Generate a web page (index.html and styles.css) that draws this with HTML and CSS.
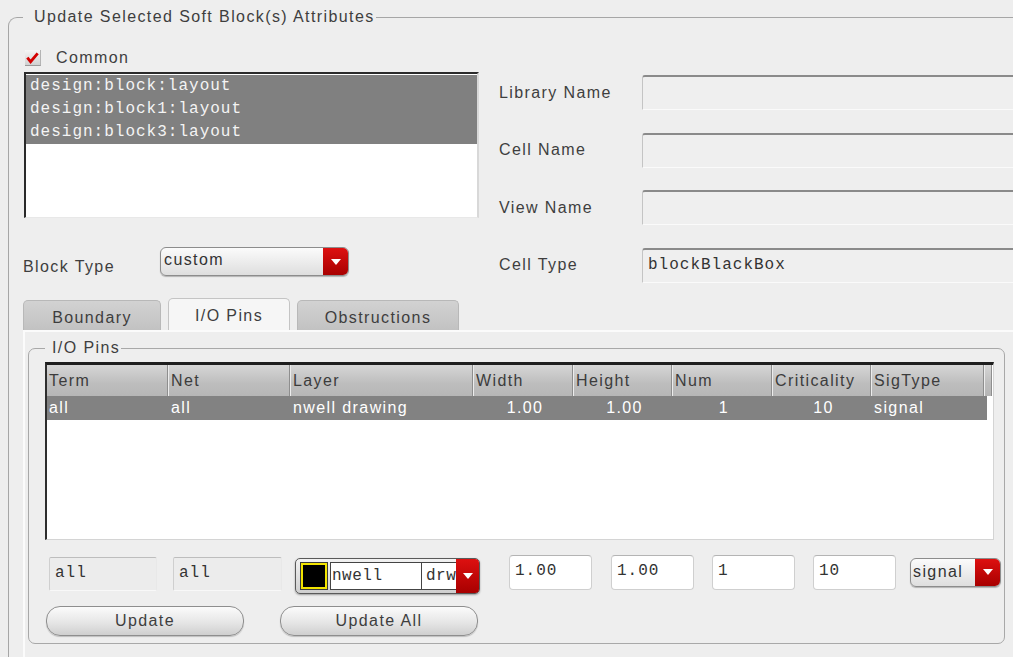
FILE: index.html
```html
<!DOCTYPE html>
<html>
<head>
<meta charset="utf-8">
<title>Update Selected Soft Block(s) Attributes</title>
<link rel="stylesheet" href="styles.css">
</head>
<body>
<div class="page">
  <fieldset class="group outer">
    <legend class="outer-title">Update Selected Soft Block(s) Attributes</legend>
    <div class="top">
      <div class="left">
        <div class="check">
          <span class="checkbox">
            <svg width="16" height="16" viewBox="0 0 16 16"><path d="M2.5 7.5 L6 12 L13.5 3" fill="none" stroke="#d40000" stroke-width="3" stroke-linejoin="miter"/></svg>
          </span>
          <span class="check-label">Common</span>
        </div>
        <div class="listbox mono">
          <div class="li sel">design:block:layout</div>
          <div class="li sel">design:block1:layout</div>
          <div class="li sel">design:block3:layout</div>
        </div>
        <div class="blocktype">
          <span class="bt-label">Block Type</span>
          <div class="combo combo-custom">
            <span class="combo-text">custom</span>
            <span class="combo-btn"><svg width="10" height="6" viewBox="0 0 10 6"><polygon points="0,0 10,0 5,6" fill="#fff"/></svg></span>
          </div>
        </div>
      </div>
      <div class="right">
        <div class="frow"><span class="flabel">Library Name</span><div class="rofield mono"></div></div>
        <div class="frow"><span class="flabel">Cell Name</span><div class="rofield mono"></div></div>
        <div class="frow"><span class="flabel">View Name</span><div class="rofield mono"></div></div>
        <div class="frow"><span class="flabel">Cell Type</span><div class="rofield mono">blockBlackBox</div></div>
      </div>
    </div>

    <div class="tabs">
      <div class="tab tab-boundary">Boundary</div>
      <div class="tab tab-io active">I/O Pins</div>
      <div class="tab tab-obs">Obstructions</div>
    </div>

    <div class="panel">
      <fieldset class="group inner">
        <legend class="inner-title">I/O Pins</legend>
        <div class="table">
          <div class="thead">
            <div class="th">Term</div>
            <div class="th">Net</div>
            <div class="th">Layer</div>
            <div class="th">Width</div>
            <div class="th">Height</div>
            <div class="th">Num</div>
            <div class="th">Criticality</div>
            <div class="th">SigType</div>
            <div class="th th-fill"></div>
          </div>
          <div class="trow sel">
            <div class="td">all</div>
            <div class="td">all</div>
            <div class="td">nwell drawing</div>
            <div class="td num">1.00</div>
            <div class="td num">1.00</div>
            <div class="td num">1</div>
            <div class="td num">10</div>
            <div class="td">signal</div>
          </div>
        </div>

        <div class="edit-row">
          <div class="rofield small mono e-term">all</div>
          <div class="rofield small mono e-net">all</div>
          <div class="layer-combo">
            <span class="swatch"></span>
            <span class="lc-name mono">nwell</span>
            <span class="lc-purpose mono">drw</span>
            <span class="combo-btn"><svg width="10" height="6" viewBox="0 0 10 6"><polygon points="0,0 10,0 5,6" fill="#fff"/></svg></span>
          </div>
          <div class="input mono e-width">1.00</div>
          <div class="input mono e-height">1.00</div>
          <div class="input mono e-num">1</div>
          <div class="input mono e-crit">10</div>
          <div class="combo combo-signal">
            <span class="combo-text">signal</span>
            <span class="combo-btn"><svg width="10" height="6" viewBox="0 0 10 6"><polygon points="0,0 10,0 5,6" fill="#fff"/></svg></span>
          </div>
        </div>

        <div class="btn-row">
          <div class="btn btn-update">Update</div>
          <div class="btn btn-update-all">Update All</div>
        </div>
      </fieldset>
    </div>
  </fieldset>
</div>
</body>
</html>
```

FILE: styles.css
```css
* { box-sizing: border-box; }

html, body {
  margin: 0;
  padding: 0;
}

body {
  width: 1013px;
  height: 672px;
  overflow: hidden;
  background: #ffffff;
  font-family: "Liberation Sans", Arial, sans-serif;
  font-size: 16px;
  letter-spacing: 1.4px;
  color: #3e3e3e;
}

.mono {
  font-family: "Liberation Mono", "Courier New", monospace;
  font-size: 16px;
  letter-spacing: 1px;
}

.page {
  height: 657px;
  background: #eeeeee;
  padding: 8px 0 0 8px;
}

.group {
  margin: 0;
  min-width: 0;
  border: 1px solid #a6a6a6;
}

/* ---------- outer group ---------- */
.outer {
  height: 649px;
  border-right: none;
  border-bottom: none;
  border-top-left-radius: 9px;
  padding: 21px 0 0 14px;
}

.outer-title {
  padding: 0 1px 0 11px;
  line-height: 18px;
}

.top {
  display: grid;
  grid-template-columns: 456px 1fr;
  column-gap: 20px;
}

.left {
  display: flex;
  flex-direction: column;
}

.check {
  height: 22px;
  display: flex;
  align-items: center;
}

.checkbox {
  width: 16px;
  height: 16px;
  margin-left: 2px;
  background: linear-gradient(#f6f6f6, #d0d0d0);
  border-bottom: 1px solid #9a9a9a;
  border-right: 1px solid #b4b4b4;
  display: flex;
}

.check-label {
  margin-left: 15px;
}

.listbox {
  margin-top: 3px;
  margin-left: 1px;
  width: 455px;
  height: 146px;
  background: #ffffff;
  border-top: 2px solid #2a2a2a;
  border-left: 2px solid #2a2a2a;
  border-right: 2px solid #d8d8d8;
  border-bottom: 1px solid #e8e8e8;
  padding-top: 1px;
}

.li {
  height: 23px;
  line-height: 23px;
  padding-left: 4px;
  white-space: nowrap;
}

.li.sel {
  background: #808080;
  color: #f4f4f4;
}

.blocktype {
  margin-top: 29px;
  height: 29px;
  display: flex;
  align-items: flex-end;
}

.bt-label {
  width: 137px;
  line-height: 19px;
}

/* combo boxes */
.combo {
  display: flex;
  align-items: stretch;
  border: 1px solid #8c8c8c;
  border-radius: 6px;
  background: linear-gradient(#fbfbfb, #dedede);
  box-shadow: 0 1px 1px rgba(0,0,0,0.25);
  overflow: hidden;
}

.combo-custom {
  width: 189px;
  height: 29px;
  align-self: flex-start;
}

.combo-text {
  flex: 1;
  padding-left: 3px;
  line-height: 24px;
  color: #333;
}

.combo-btn {
  width: 25px;
  flex: none;
  background: linear-gradient(#dd1010, #a80000);
  display: flex;
  align-items: center;
  justify-content: center;
}

/* right column fields */
.right {
  margin-top: 28px;
  display: flex;
  flex-direction: column;
  gap: 22.5px;
}

.frow {
  height: 35px;
  display: flex;
  align-items: center;
}

.flabel {
  width: 143px;
  flex: none;
}

.rofield {
  flex: 1;
  height: 35px;
  background: #efefef;
  border-top: 2px solid #8a8a8a;
  border-left: 1px solid #c4c4c4;
  border-bottom: 1px solid #fafafa;
  border-top-left-radius: 3px;
  padding-left: 5px;
  line-height: 31px;
  color: #333;
  white-space: nowrap;
}

/* ---------- tabs ---------- */
.tabs {
  margin-top: 15.5px;
  height: 32px;
  display: flex;
  align-items: flex-end;
  gap: 7px;
}

.tab {
  height: 30px;
  border: 1px solid #b8b8b8;
  border-bottom: none;
  border-radius: 5px 5px 0 0;
  background: linear-gradient(#d2d2d2, #c2c2c2);
  text-align: center;
  line-height: 33px;
}

.tab-boundary { width: 138px; }
.tab-io { width: 122px; }
.tab-obs { width: 162px; }

.tab.active {
  height: 32px;
  background: #f6f6f6;
  border-color: #c4c4c4;
  line-height: 33px;
}

/* ---------- panel ---------- */
.panel {
  height: 327px;
  border-top: 2px solid #fbfbfb;
  border-left: 2px solid #fbfbfb;
  padding: 7px 8px 0 3px;
}

.inner {
  border-radius: 7px;
  border-color: #a8a8a8;
  padding: 5px 10px 7px 16px;
}

.inner-title {
  padding: 0 1px 0 7px;
  line-height: 18px;
}

/* table */
.table {
  height: 178px;
  background: #ffffff;
  border-top: 3px solid #1e1e1e;
  border-left: 2px solid #2e2e2e;
  border-right: 1px solid #d4d4d4;
  border-bottom: 1px solid #d4d4d4;
}

.thead, .trow {
  display: grid;
  grid-template-columns: 121px 122px 183px 100px 99px 100px 99px 113px 1fr;
}

.thead {
  height: 31px;
}

.th {
  background: linear-gradient(#d6d6d6, #bdbdbd 60%, #b6b6b6);
  border-left: 1px solid #ececec;
  border-right: 1px solid #8e8e8e;
  line-height: 31px;
  padding-left: 2px;
  color: #3c3c3c;
  white-space: nowrap;
}

.th:first-child { border-left: none; }

.th-fill {
  margin-right: 1px;
}

.trow {
  height: 24px;
  margin-right: 6px;
}

.trow.sel {
  background: #828282;
  color: #ffffff;
}

.td {
  line-height: 24px;
  padding-left: 3px;
  white-space: nowrap;
}

.td:first-child { padding-left: 2px; }

.td.num {
  text-align: center;
  padding-left: 4px;
}

/* edit row */
.edit-row {
  margin-top: 14px;
  height: 40px;
  display: flex;
  align-items: center;
}

.edit-row > * { flex: none; }

.rofield.small {
  height: 34px;
  border-top: 1px solid #bdbdbd;
  border-left: 1px solid #cfcfcf;
  border-right: 1px solid #e8e8e8;
  border-bottom: 1px solid #f8f8f8;
  border-radius: 2px;
  line-height: 30px;
  background: #ececec;
}

.e-term { width: 108px; margin-left: 4px; }
.e-net { width: 109px; margin-left: 16px; }

.layer-combo {
  width: 185px;
  height: 36px;
  margin-left: 13px;
  margin-top: 4px;
  display: flex;
  align-items: stretch;
  border: 1px solid #5a5a5a;
  border-radius: 5px;
  background: linear-gradient(#f2f2f2, #cfcfcf);
  box-shadow: 0 1px 2px rgba(0,0,0,0.35);
  padding: 3px 0 3px 4px;
  overflow: hidden;
}

.swatch {
  width: 26px;
  flex: none;
  margin: 1px 3px 1px 1px;
  background: #000;
  border: 2px solid #f2e400;
  box-shadow: 0 0 0 1px #3a3a3a;
}

.lc-name {
  width: 92px;
  flex: none;
  background: #ffffff;
  border: 1px solid #444;
  line-height: 26px;
  padding-left: 1px;
  color: #333;
  letter-spacing: 0.5px;
}

.lc-purpose {
  width: 34px;
  flex: none;
  background: #ffffff;
  border-top: 1px solid #444;
  border-bottom: 1px solid #444;
  line-height: 26px;
  padding-left: 4px;
  overflow: hidden;
  white-space: nowrap;
  color: #333;
  letter-spacing: 0.5px;
}

.layer-combo .combo-btn {
  margin: -3px 0;
  width: 24px;
}

.input {
  width: 83px;
  height: 35px;
  margin-top: -4px;
  background: #ffffff;
  border: 1px solid #cfcfcf;
  border-top: 1px solid #b4b4b4;
  border-radius: 4px;
  line-height: 31px;
  padding-left: 5px;
  color: #333;
}

.e-width { margin-left: 29px; }
.e-height { margin-left: 19px; }
.e-num { margin-left: 18px; }
.e-crit { margin-left: 18px; }

.combo-signal {
  width: 91px;
  height: 29px;
  margin-left: 14px;
  margin-top: -4px;
}

.combo-signal .combo-text {
  padding-left: 2px;
  line-height: 25px;
}

/* buttons */
.btn-row {
  margin-top: 12px;
  display: flex;
  gap: 36px;
}

.btn {
  width: 198px;
  height: 30px;
  border: 1px solid #8e8e8e;
  border-radius: 14px;
  background: linear-gradient(#fbfbfb, #e6e6e6 55%, #cfcfcf);
  box-shadow: 0 1px 1px rgba(0,0,0,0.2);
  text-align: center;
  line-height: 28px;
}

.btn-update { margin-left: 1px; }
```
